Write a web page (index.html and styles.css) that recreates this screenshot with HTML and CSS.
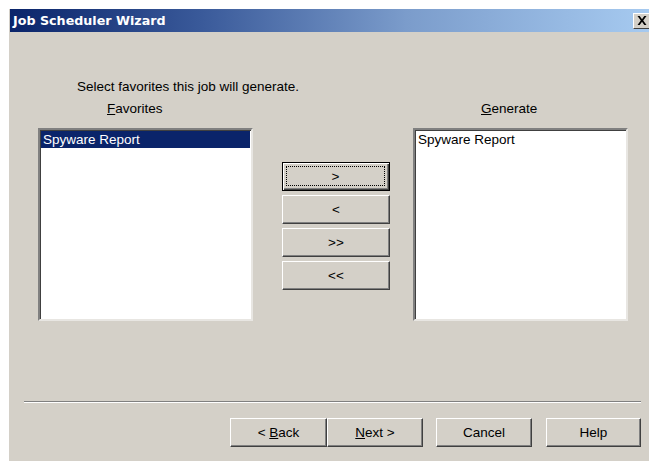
FILE: index.html
```html
<!DOCTYPE html>
<html>
<head>
<meta charset="utf-8">
<title>Job Scheduler Wizard</title>
<link rel="stylesheet" href="styles.css">
</head>
<body>
<div class="window">
  <div class="titlebar">
    <span class="title">Job Scheduler Wizard</span>
    <span class="close">
      <svg width="10" height="9" viewBox="0 0 10 9"><path d="M0.5 0h2.2l2.3 3.2 2.3-3.2h2.2L6.2 4.5 9.5 9H7.3L5 5.8 2.7 9H0.5l3.3-4.5z" fill="#000"/></svg>
    </span>
  </div>
  <div class="content">
    <p class="intro">Select favorites this job will generate.</p>
    <div class="panes">
      <div class="col col-left">
        <div class="label label-left"><u>F</u>avorites</div>
        <div class="listbox">
          <div class="item selected">Spyware Report</div>
        </div>
      </div>
      <div class="movers">
        <button class="btn mover default"><span class="focus">&gt;</span></button>
        <button class="btn mover">&lt;</button>
        <button class="btn mover">&gt;&gt;</button>
        <button class="btn mover">&lt;&lt;</button>
      </div>
      <div class="col col-right">
        <div class="label label-right"><u>G</u>enerate</div>
        <div class="listbox">
          <div class="item">Spyware Report</div>
        </div>
      </div>
    </div>
  </div>
  <div class="separator"></div>
  <div class="footer">
    <div class="pair">
      <button class="btn nav back"><span>&lt;&nbsp;<u>B</u>ack</span></button>
      <button class="btn nav"><span><u>N</u>ext&nbsp;&gt;</span></button>
    </div>
    <button class="btn nav">Cancel</button>
    <button class="btn nav help">Help</button>
  </div>
</div>
</body>
</html>
```

FILE: styles.css
```css
html, body {
  margin: 0;
  padding: 0;
  background: #ffffff;
  width: 649px;
  height: 461px;
  overflow: hidden;
}

.window {
  margin: 9px 0 0 9px;
  height: 452px;
  background: #d4d0c8;
  font-family: "Liberation Sans", Arial, sans-serif;
  font-size: 13.5px;
  color: #000;
  display: flex;
  flex-direction: column;
}

.titlebar {
  height: 23px;
  margin-left: 1px;
  background: linear-gradient(to right, #0a246a 0%, #3a5a9a 30%, #7b9ccb 62%, #a6caf0 100%);
  display: flex;
  align-items: center;
  justify-content: space-between;
}

.title {
  color: #fff;
  font-family: "DejaVu Sans", sans-serif;
  font-weight: bold;
  font-size: 12.7px;
  padding-left: 3px;
}

.close {
  width: 17px;
  height: 16px;
  margin-right: -1px;
  box-sizing: border-box;
  background: #d4d0c8;
  border-top: 1px solid #fff;
  border-left: 1px solid #fff;
  border-bottom: 1px solid #404040;
  display: flex;
  align-items: center;
  justify-content: center;
}

.content {
  flex: 1;
  padding-left: 29px;
}

.intro {
  margin: 47px 0 0 39px;
  line-height: 16px;
}

.panes {
  display: flex;
  align-items: flex-start;
}

.col-left { width: 215px; }
.col-right { width: 215px; margin-left: 23px; }

.label {
  line-height: 16px;
  margin-top: 6px;
  height: 27px;
}
.label-left { padding-left: 69px; }
.label-right { padding-left: 68px; }

.listbox {
  height: 193px;
  box-sizing: border-box;
  background: #fff;
  border-top: 2px solid #808080;
  border-left: 2px solid #808080;
  border-right: 2px solid #e8e6e2;
  border-bottom: 2px solid #e8e6e2;
  box-shadow: inset 1px 1px 0 #404040;
  padding: 1px 1px 0 1px;
}

.item {
  height: 17px;
  line-height: 17px;
  padding-left: 2px;
}
.item.selected {
  background: #0a246a;
  color: #fff;
}

.movers {
  width: 108px;
  margin-left: 29px;
  margin-top: 67px;
  display: flex;
  flex-direction: column;
  gap: 4px;
}

.btn {
  font-family: "Liberation Sans", Arial, sans-serif;
  font-size: 13.5px;
  color: #000;
  background: #d4d0c8;
  box-sizing: border-box;
  border-top: 1px solid #fff;
  border-left: 1px solid #fff;
  border-right: 1px solid #404040;
  border-bottom: 1px solid #404040;
  box-shadow: inset -1px -1px 0 #808080;
  padding: 0;
  margin: 0;
  display: flex;
  align-items: center;
  justify-content: center;
}

.mover {
  width: 108px;
  height: 29px;
}

.mover.default {
  border: 1px solid #000;
  box-shadow: inset 1px 1px 0 #fff, inset -1px -1px 0 #404040, inset -2px -2px 0 #808080;
  padding: 3px 4px 4px 3px;
}

.focus {
  flex: 1;
  align-self: stretch;
  border: 1px dotted #000;
  display: flex;
  align-items: center;
  justify-content: center;
}

.separator {
  margin: 0 8px 0 15px;
  height: 0;
  border-top: 1px solid #808080;
  border-bottom: 1px solid #fff;
}

.footer {
  height: 58px;
  box-sizing: border-box;
  display: flex;
  align-items: flex-start;
  padding: 15px 0 0 221px;
}

.pair { display: flex; margin-right: 13px; }

.nav {
  width: 96px;
  height: 29px;
}
.nav.back { width: 97px; }
.nav.help { width: 95px; margin-left: 14px; }
```
